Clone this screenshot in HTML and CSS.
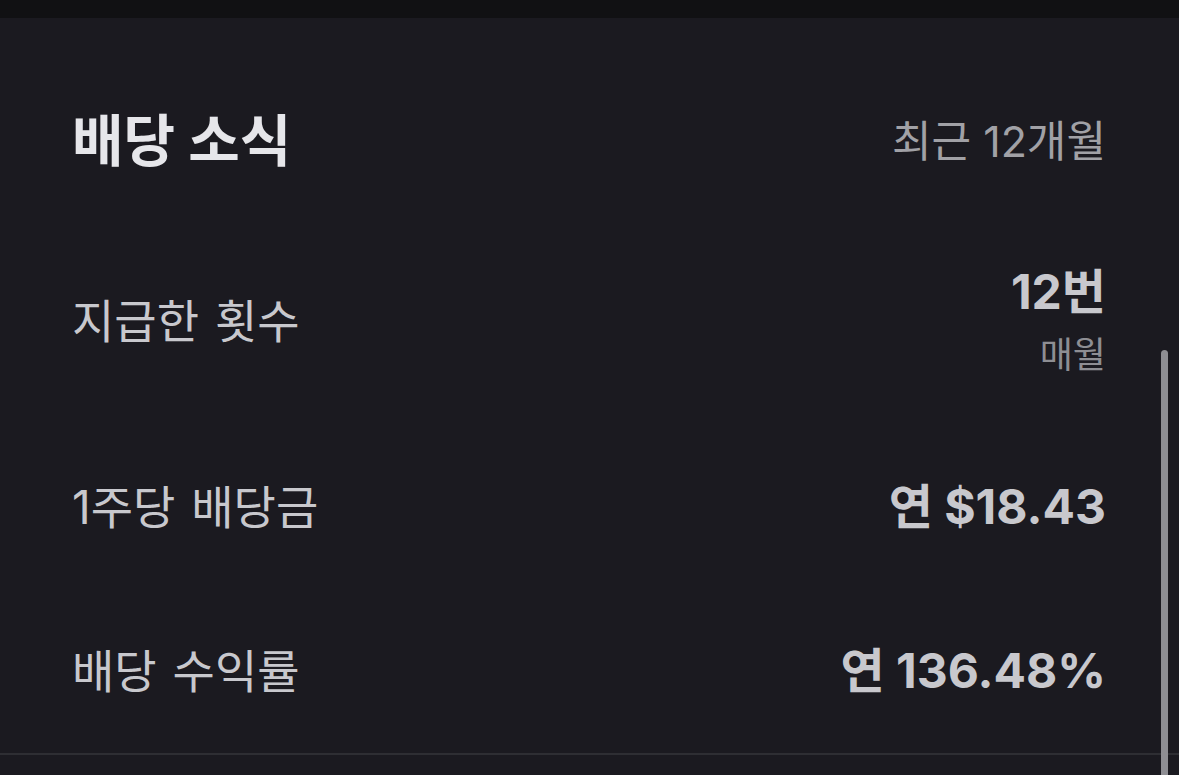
FILE: index.html
```html
<!DOCTYPE html>
<html lang="ko">
<head>
<meta charset="utf-8">
<link rel="stylesheet" href="styles.css">
</head>
<body>
<div class="topbar"></div>
<section class="section">
  <div class="header">
    <h2 class="title">배당 소식</h2>
    <span class="period">최근 12개월</span>
  </div>
  <div class="row">
    <span class="label">지급한 횟수</span>
    <div class="value-group">
      <span class="value">12번</span>
      <span class="sub">매월</span>
    </div>
  </div>
  <div class="row">
    <span class="label">1주당 배당금</span>
    <span class="value">연 $18.43</span>
  </div>
  <div class="row">
    <span class="label">배당 수익률</span>
    <span class="value">연 136.48%</span>
  </div>
  <div class="divider"></div>
</section>
<div class="scrollbar"></div>
</body>
</html>
```
FILE: styles.css
```css
html, body {
  margin: 0;
  padding: 0;
  background: #1b1a20;
  height: 775px;
  overflow: hidden;
}
body {
  font-family: Inter, "Noto Sans CJK KR", sans-serif;
  position: relative;
}
.topbar {
  height: 18px;
  background: #111113;
}
.section {
  padding: 0 73px 0 72px;
}
.header {
  display: flex;
  justify-content: space-between;
  align-items: center;
  padding-top: 92px;
  margin-bottom: 45px;
}
.title {
  margin: 0;
  font-size: 56px;
  line-height: 62px;
  font-weight: 700;
  color: #e6e6ea;
}
.period {
  font-size: 43px;
  line-height: 62px;
  color: #a1a1a6;
}
.row {
  display: flex;
  justify-content: space-between;
  align-items: center;
  padding: 54px 0;
}
.label {
  font-size: 46px;
  line-height: 56px;
  color: #c8c8cd;
  word-spacing: 3px;
}
.value-group {
  display: flex;
  flex-direction: column;
  align-items: flex-end;
  margin: -7px 0 -6px;
}
.value {
  font-size: 48px;
  line-height: 56px;
  font-weight: 700;
  color: #c8c8cd;
}
.sub {
  margin-top: 13px;
  font-size: 36px;
  line-height: 44px;
  color: #8e8e93;
}
.divider {
  height: 2px;
  background: #2e2e33;
  margin: 0 -73px 0 -72px;
}
.scrollbar {
  position: absolute;
  left: 1161px;
  top: 350px;
  width: 7px;
  height: 440px;
  border-radius: 4px;
  background: #8e8e93;
}
```
